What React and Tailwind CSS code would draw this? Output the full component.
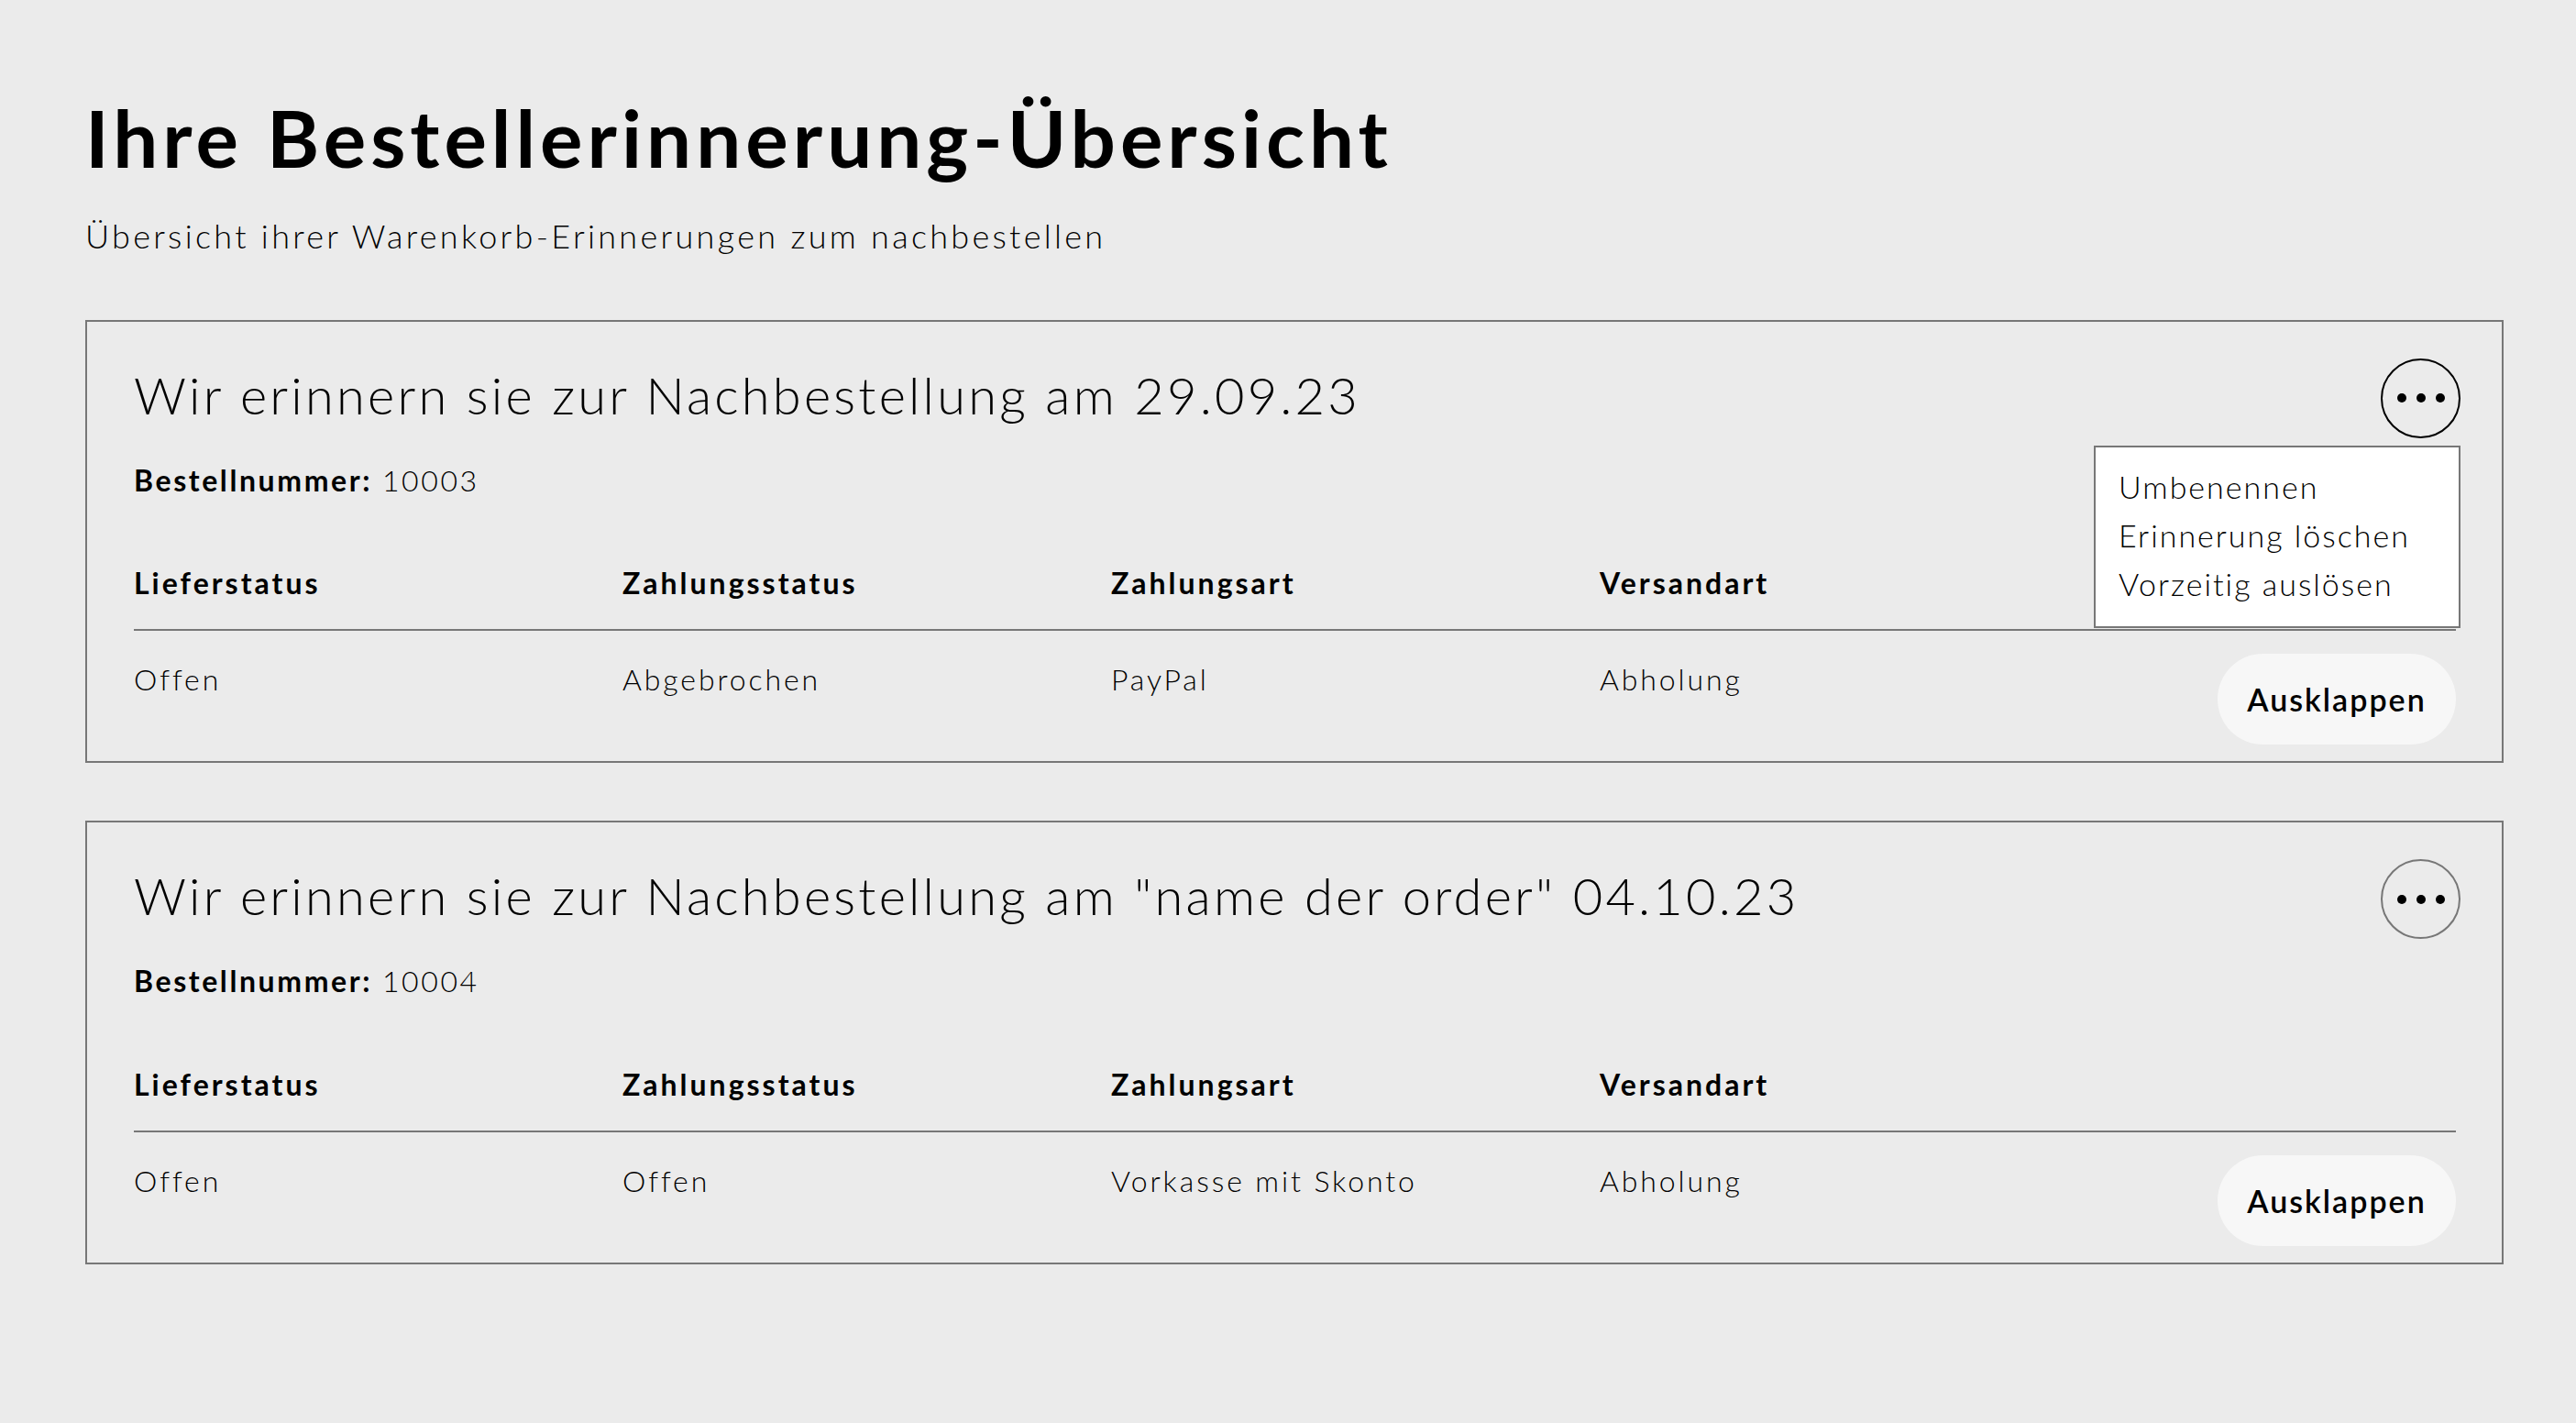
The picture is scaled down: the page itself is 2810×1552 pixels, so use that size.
import React from 'react';

const orders = [
  {
    title: 'Wir erinnern sie zur Nachbestellung am 29.09.23',
    number: '10003',
    values: ['Offen', 'Abgebrochen', 'PayPal', 'Abholung'],
    menuOpen: true,
  },
  {
    title: 'Wir erinnern sie zur Nachbestellung am "name der order" 04.10.23',
    number: '10004',
    values: ['Offen', 'Offen', 'Vorkasse mit Skonto', 'Abholung'],
    menuOpen: false,
  },
];

const headers = ['Lieferstatus', 'Zahlungsstatus', 'Zahlungsart', 'Versandart'];

function MoreButton({ open }) {
  return (
    <div className="relative -mr-[5px] -mt-[6px]">
      <button
        className={`w-[87px] h-[87px] rounded-full border-2 flex items-center justify-center gap-[11px] ${
          open ? 'border-black' : 'border-[#777]'
        }`}
      >
        <span className="w-[10px] h-[10px] rounded-full bg-black" />
        <span className="w-[10px] h-[10px] rounded-full bg-black" />
        <span className="w-[10px] h-[10px] rounded-full bg-black" />
      </button>
      {open && (
        <div className="absolute right-0 top-full mt-[8px] w-[400px] bg-white border-2 border-[#777] pl-[25px] pt-[16px] pb-[20px] z-10">
          <ul className="text-[34px] leading-[53px] font-light tracking-[2px] text-black">
            <li>Umbenennen</li>
            <li>Erinnerung löschen</li>
            <li>Vorzeitig auslösen</li>
          </ul>
        </div>
      )}
    </div>
  );
}

function OrderCard({ order }) {
  return (
    <div className="border-2 border-[#777] pl-[51px] pr-[50px] pt-[46px] pb-[18px]">
      <div className="flex items-start justify-between">
        <h2 className="text-[56px] leading-[1.2] font-light tracking-[3.2px] text-black">{order.title}</h2>
        <MoreButton open={order.menuOpen} />
      </div>
      <p className="mt-[27px] text-[32px] leading-[1.2] tracking-[2.6px] text-black">
        <span className="font-bold">Bestellnummer:</span> <span className="font-light">{order.number}</span>
      </p>
      <div className="mt-[74px] flex pb-[31px] border-b-2 border-[#777]">
        {headers.map((h) => (
          <div key={h} className="w-[533px] text-[32px] leading-[1.2] font-bold tracking-[3px] text-black">
            {h}
          </div>
        ))}
      </div>
      <div className="mt-[25px] flex items-start">
        {order.values.map((v, i) => (
          <div key={i} className="w-[533px] mt-[9px] text-[32px] leading-[1.2] font-light tracking-[2.9px] text-black">
            {v}
          </div>
        ))}
        <button className="ml-auto w-[260px] h-[99px] rounded-full bg-[#f7f7f7] text-[34px] font-semibold tracking-[2px] text-black">
          Ausklappen
        </button>
      </div>
    </div>
  );
}

export default function App() {
  return (
    <div className="min-h-screen bg-[#ebebeb] font-['Lato',sans-serif] px-[93px] pt-[98px] pb-[120px]">
      <h1 className="text-[87px] leading-[1.2] font-bold tracking-[5px] text-black">Ihre Bestellerinnerung-Übersicht</h1>
      <p className="mt-[34px] text-[36px] leading-[1.2] font-light tracking-[3.3px] text-black">
        Übersicht ihrer Warenkorb-Erinnerungen zum nachbestellen
      </p>
      <div className="mt-[69px] flex flex-col gap-[63px] w-[2638px]">
        {orders.map((o) => (
          <OrderCard key={o.number} order={o} />
        ))}
      </div>
    </div>
  );
}
